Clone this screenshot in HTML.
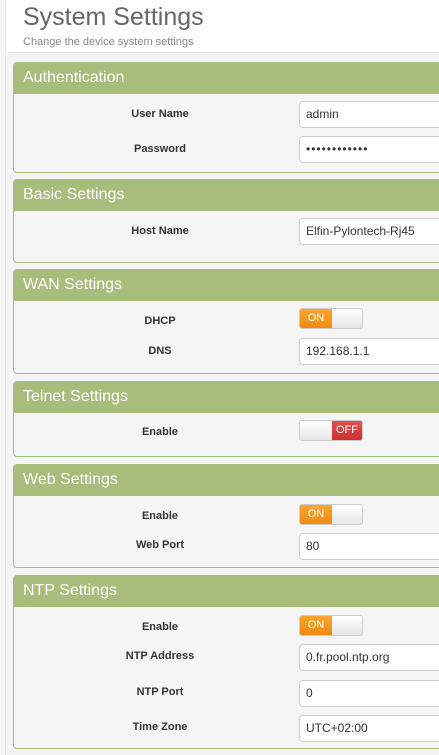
<!DOCTYPE html>
<html><head><style>
*{box-sizing:border-box;margin:0;padding:0}
body{width:439px;height:755px;overflow:hidden;background:#fff;font-family:"Liberation Sans",sans-serif;position:relative}
.side{position:absolute;left:0;top:0;width:6px;height:755px;background:#f5f5f5;border-right:1px solid #e3e3e3}
.top{position:absolute;left:7px;top:0;width:432px;height:53px;background:#fff;border-bottom:1px solid #e6e6e6}
.grey{position:absolute;left:7px;top:54px;width:432px;height:701px;background:#f4f4f4}
h1{position:absolute;left:23px;top:3px;font-weight:normal;font-size:25px;color:#666}
.sub{position:absolute;left:23px;top:36px;font-size:11px;color:#888}
.p{position:absolute;left:13px;width:440px;border:1px solid #a8bc7b;border-radius:4px;background:#f4f5f4;overflow:hidden}
.h{background:#a8bc7b;color:#fff;font-size:16px;height:31px;line-height:30px;padding-left:9px}
.l{position:absolute;left:13px;width:294px;text-align:center;font-size:11px;font-weight:bold;color:#333}
.i{position:absolute;left:299px;width:150px;height:27px;background:#fff;border:1px solid #ccc;border-radius:4px;font-size:12px;line-height:25px;padding-left:6px;color:#333}
.t{position:absolute;left:299px;width:64px;height:21px;border:1px solid #ccc;border-radius:3px;background:linear-gradient(#fff,#e6e6e6);overflow:hidden}
.on{position:absolute;left:0;top:0;width:32px;height:19px;background:linear-gradient(#fba630,#f08a10);color:#fff;font-size:11px;line-height:18px;text-align:center}
.off{position:absolute;right:0;top:0;width:30px;height:19px;background:linear-gradient(#e05050,#cc3030);color:#fff;font-size:11px;line-height:18px;text-align:center}
</style></head><body>
<div class="side"></div><div class="top"></div><div class="grey"></div>
<h1>System Settings</h1><div class="sub">Change the device system settings</div>

<div class="p" style="top:62px;height:111px"><div class="h">Authentication</div></div>
<div class="l" style="top:108px">User Name</div><div class="i" style="top:101px">admin</div>
<div class="l" style="top:143px">Password</div><div class="i" style="top:136px;letter-spacing:1px">••••••••••••</div>

<div class="p" style="top:179px;height:84px"><div class="h">Basic Settings</div></div>
<div class="l" style="top:225px">Host Name</div><div class="i" style="top:218px">Elfin-Pylontech-Rj45</div>

<div class="p" style="top:269px;height:105px"><div class="h">WAN Settings</div></div>
<div class="l" style="top:315px">DHCP</div><div class="t" style="top:308px"><div class="on">ON</div></div>
<div class="l" style="top:345px">DNS</div><div class="i" style="top:338px">192.168.1.1</div>

<div class="p" style="top:381px;height:76px"><div class="h">Telnet Settings</div></div>
<div class="l" style="top:426px">Enable</div><div class="t" style="top:420px"><div class="off">OFF</div></div>

<div class="p" style="top:464px;height:104px"><div class="h">Web Settings</div></div>
<div class="l" style="top:510px">Enable</div><div class="t" style="top:504px"><div class="on">ON</div></div>
<div class="l" style="top:539px">Web Port</div><div class="i" style="top:533px">80</div>

<div class="p" style="top:575px;height:174px"><div class="h">NTP Settings</div></div>
<div class="l" style="top:621px">Enable</div><div class="t" style="top:615px"><div class="on">ON</div></div>
<div class="l" style="top:650px">NTP Address</div><div class="i" style="top:644px">0.fr.pool.ntp.org</div>
<div class="l" style="top:686px">NTP Port</div><div class="i" style="top:680px">0</div>
<div class="l" style="top:721px">Time Zone</div><div class="i" style="top:715px">UTC+02:00</div>
</body></html>
